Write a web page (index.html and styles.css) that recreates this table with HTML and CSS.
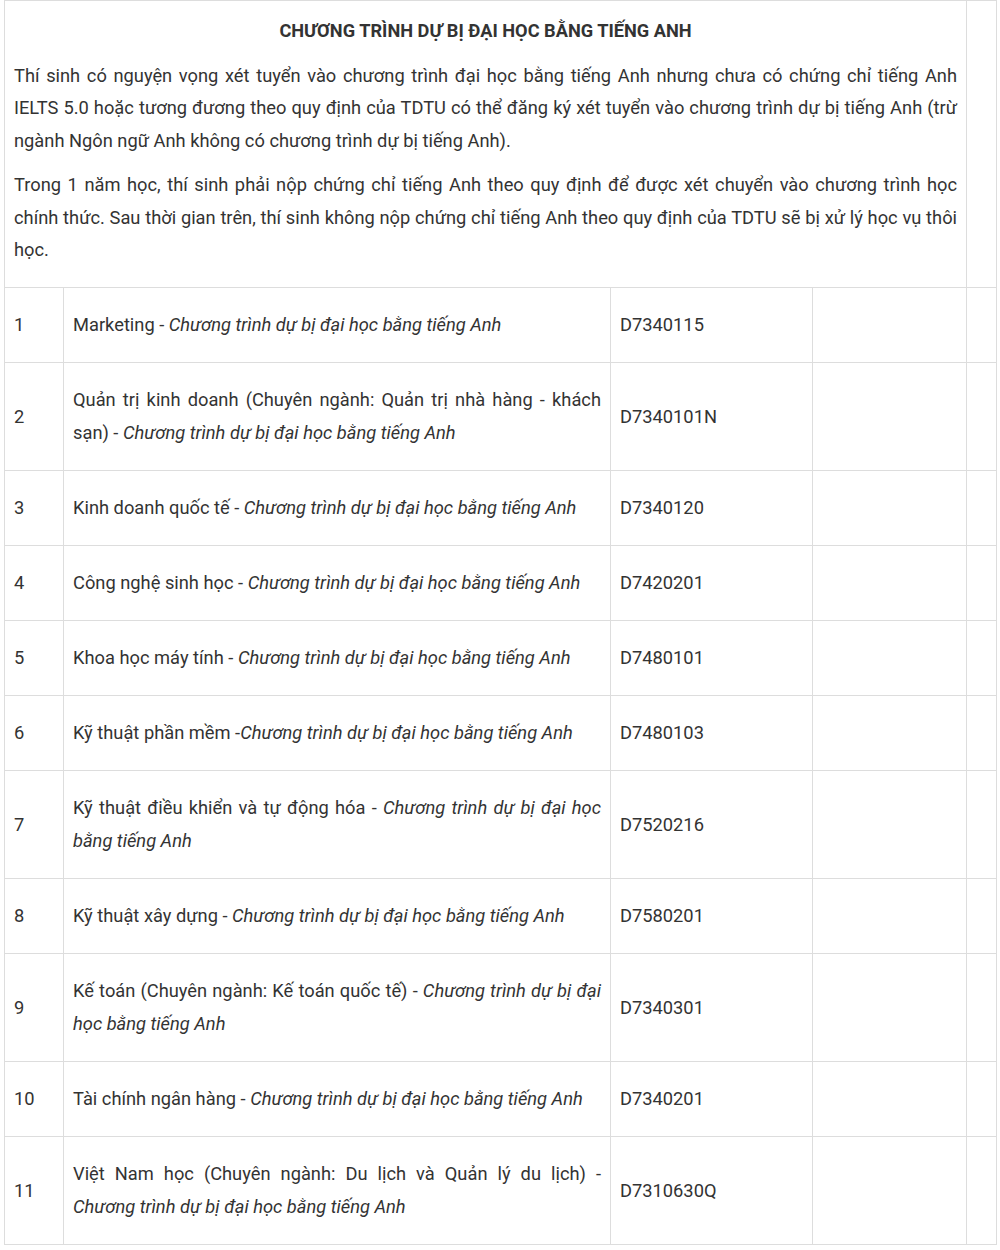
FILE: index.html
```html
<!DOCTYPE html>
<html lang="vi">
<head>
    <meta charset="UTF-8">
    <meta name="viewport" content="width=device-width, initial-scale=1.0">
    <title>Chương trình dự bị đại học bằng tiếng Anh</title>
    <link rel="stylesheet" href="styles.css">
</head>
<body>
    <table class="nganh-table">
        <colgroup>
            <col class="col-stt">
            <col class="col-ten">
            <col class="col-ma">
            <col class="col-trong">
            <col class="col-le">
        </colgroup>
        <tbody>
            <!-- Phần giới thiệu -->
            <tr>
                <td colspan="4" class="intro">
                    <p class="intro-title">CHƯƠNG TRÌNH DỰ BỊ ĐẠI HỌC BẰNG TIẾNG ANH</p>
                    <p>Thí sinh có nguyện vọng xét tuyển vào chương trình đại học bằng tiếng Anh nhưng chưa có chứng chỉ tiếng Anh IELTS 5.0 hoặc tương đương theo quy định của TDTU có thể đăng ký xét tuyển vào chương trình dự bị tiếng Anh (trừ ngành Ngôn ngữ Anh không có chương trình dự bị tiếng Anh).</p>
                    <p>Trong 1 năm học, thí sinh phải nộp chứng chỉ tiếng Anh theo quy định để được xét chuyển vào chương trình học chính thức. Sau thời gian trên, thí sinh không nộp chứng chỉ tiếng Anh theo quy định của TDTU sẽ bị xử lý học vụ thôi học.</p>
                </td>
                <td></td>
            </tr>

            <!-- Danh sách ngành -->
            <tr>
                <td>1</td>
                <td class="ten">Marketing - <em>Chương trình dự bị đại học bằng tiếng Anh</em></td>
                <td>D7340115</td>
                <td></td>
                <td></td>
            </tr>
            <tr>
                <td>2</td>
                <td class="ten">Quản trị kinh doanh (Chuyên ngành: Quản trị nhà hàng - khách sạn) - <em>Chương trình dự bị đại học bằng tiếng Anh</em></td>
                <td>D7340101N</td>
                <td></td>
                <td></td>
            </tr>
            <tr>
                <td>3</td>
                <td class="ten">Kinh doanh quốc tế - <em>Chương trình dự bị đại học bằng tiếng Anh</em></td>
                <td>D7340120</td>
                <td></td>
                <td></td>
            </tr>
            <tr>
                <td>4</td>
                <td class="ten">Công nghệ sinh học - <em>Chương trình dự bị đại học bằng tiếng Anh</em></td>
                <td>D7420201</td>
                <td></td>
                <td></td>
            </tr>
            <tr>
                <td>5</td>
                <td class="ten">Khoa học máy tính - <em>Chương trình dự bị đại học bằng tiếng Anh</em></td>
                <td>D7480101</td>
                <td></td>
                <td></td>
            </tr>
            <tr>
                <td>6</td>
                <td class="ten">Kỹ thuật phần mềm -<em>Chương trình dự bị đại học bằng tiếng Anh</em></td>
                <td>D7480103</td>
                <td></td>
                <td></td>
            </tr>
            <tr>
                <td>7</td>
                <td class="ten">Kỹ thuật điều khiển và tự động hóa - <em>Chương trình dự bị đại học bằng tiếng Anh</em></td>
                <td>D7520216</td>
                <td></td>
                <td></td>
            </tr>
            <tr>
                <td>8</td>
                <td class="ten">Kỹ thuật xây dựng - <em>Chương trình dự bị đại học bằng tiếng Anh</em></td>
                <td>D7580201</td>
                <td></td>
                <td></td>
            </tr>
            <tr>
                <td>9</td>
                <td class="ten">Kế toán (Chuyên ngành: Kế toán quốc tế) - <em>Chương trình dự bị đại học bằng tiếng Anh</em></td>
                <td>D7340301</td>
                <td></td>
                <td></td>
            </tr>
            <tr>
                <td>10</td>
                <td class="ten">Tài chính ngân hàng - <em>Chương trình dự bị đại học bằng tiếng Anh</em></td>
                <td>D7340201</td>
                <td></td>
                <td></td>
            </tr>
            <tr>
                <td>11</td>
                <td class="ten">Việt Nam học (Chuyên ngành: Du lịch và Quản lý du lịch) - <em>Chương trình dự bị đại học bằng tiếng Anh</em></td>
                <td>D7310630Q</td>
                <td></td>
                <td></td>
            </tr>
        </tbody>
    </table>
</body>
</html>
```

FILE: styles.css
```css
* {
    margin: 0;
    padding: 0;
    box-sizing: border-box;
}

body {
    font-family: Roboto, 'Liberation Sans', Arial, sans-serif;
    background-color: #ffffff;
    color: #333333;
    font-size: 18.3px;
    line-height: 32.5px;
    padding-left: 4px;
}

.nganh-table {
    width: 992px;
    border-collapse: collapse;
    table-layout: fixed;
}

.col-stt { width: 59px; }
.col-ten { width: 547px; }
.col-ma { width: 202px; }
.col-trong { width: 154px; }
.col-le { width: 30px; }

.nganh-table td {
    border: 1px solid #dddddd;
    padding: 20.5px 9px 20.5px 9px;
    line-height: 33px;
    vertical-align: middle;
}

.nganh-table td.ten {
    text-align: justify;
}

.nganh-table td.intro {
    padding: 14px 9px 20px 9px;
    line-height: 32.5px;
    text-align: justify;
}

.intro p {
    margin-bottom: 12px;
}

.intro p:last-child {
    margin-bottom: 0;
}

.intro-title {
    text-align: center;
    font-weight: bold;
    font-size: 18.2px;
}
```
